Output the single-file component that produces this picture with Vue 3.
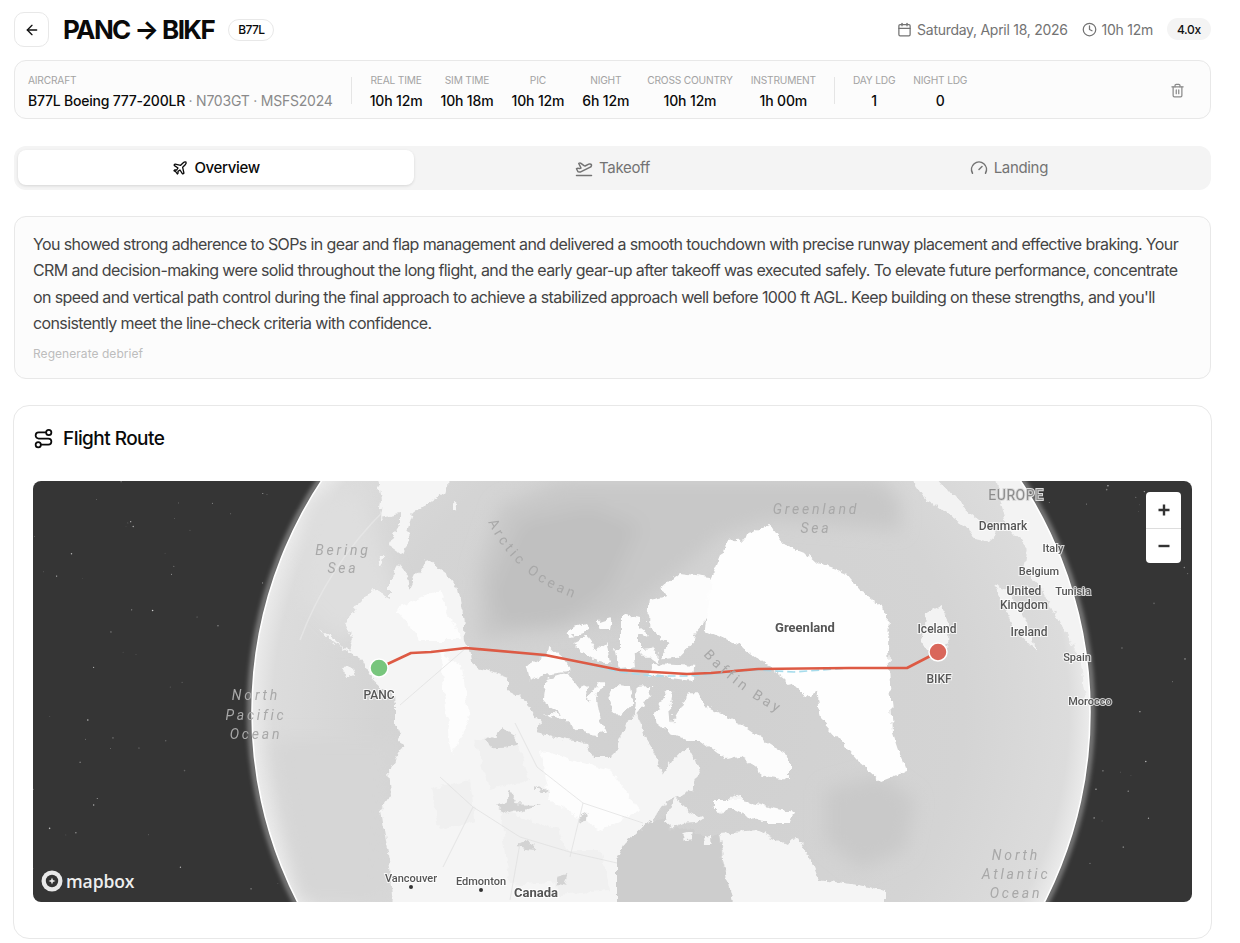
<template>
  <div class="page">
    <header class="top">
      <button class="back">
        <svg width="16" height="16" viewBox="0 0 24 24" class="ic"><path d="M12 19l-7-7 7-7" /><path d="M19 12H5" /></svg>
      </button>
      <h1 class="title">PANC → BIKF</h1>
      <span class="chip">B77L</span>
      <div class="top-meta">
        <svg width="15" height="15" viewBox="0 0 24 24" class="ic"><path d="M8 2v4" /><path d="M16 2v4" /><rect x="3" y="4" width="18" height="18" rx="2" /><path d="M3 10h18" /></svg>
        <span class="meta-date">Saturday, April 18, 2026</span>
        <svg width="15" height="15" viewBox="0 0 24 24" class="ic meta-clock"><circle cx="12" cy="12" r="10" /><path d="M12 6v6l4 2" /></svg>
        <span>10h 12m</span>
        <span class="rate">4.0x</span>
      </div>
    </header>

    <section class="info">
      <div class="cell-left">
        <div class="lbl">AIRCRAFT</div>
        <div class="val">B77L Boeing 777-200LR <span class="muted">· N703GT · MSFS2024</span></div>
      </div>
      <div class="sep"></div>
      <div v-for="s in times" :key="s.label" class="cell">
        <div class="lbl">{{ s.label }}</div>
        <div class="val">{{ s.value }}</div>
      </div>
      <div class="sep"></div>
      <div v-for="s in landings" :key="s.label" class="cell">
        <div class="lbl">{{ s.label }}</div>
        <div class="val">{{ s.value }}</div>
      </div>
      <button class="trash">
        <svg width="15" height="15" viewBox="0 0 24 24" class="ic"><path d="M3 6h18" /><path d="M19 6v14c0 1-1 2-2 2H7c-1 0-2-1-2-2V6" /><path d="M8 6V4c0-1 1-2 2-2h4c1 0 2 1 2 2v2" /><path d="M10 11v6" /><path d="M14 11v6" /></svg>
      </button>
    </section>

    <nav class="tabs">
      <div class="tab active">
        <svg width="16" height="16" viewBox="0 0 24 24" class="ic"><path d="M17.8 19.2 16 11l3.5-3.5C21 6 21.5 4 21 3c-1-.5-3 0-4.5 1.5L13 8 4.8 6.2c-.5-.1-.9.1-1.1.5l-.3.5c-.2.5-.1 1 .3 1.3L9 12l-2 3H4l-1 1 3 2 2 3 1-1v-3l3-2 3.5 5.3c.3.4.8.5 1.3.3l.5-.2c.4-.3.6-.7.5-1.2z" /></svg>
        Overview
      </div>
      <div class="tab">
        <svg width="18" height="18" viewBox="0 0 24 24" class="ic"><path d="M2 22h20" /><path d="M6.36 17.4 4 17l-2-4 1.1-.55a2 2 0 0 1 1.8 0l.17.1a2 2 0 0 0 1.8 0L8 12 5 6l.9-.45a2 2 0 0 1 2.09.2l4.02 3a2 2 0 0 0 2.1.2l4.19-2.06a2.41 2.41 0 0 1 1.73-.17L21 7a1.4 1.4 0 0 1 .87 1.99l-.38.76c-.23.46-.6.84-1.07 1.08L7.58 17.2a2 2 0 0 1-1.22.18Z" /></svg>
        Takeoff
      </div>
      <div class="tab">
        <svg width="18" height="18" viewBox="0 0 24 24" class="ic"><path d="m12 14 4-4" /><path d="M3.34 19a10 10 0 1 1 17.32 0" /></svg>
        Landing
      </div>
    </nav>

    <section class="debrief">
      <p>You showed strong adherence to SOPs in gear and flap management and delivered a smooth touchdown with precise runway placement and effective braking. Your CRM and decision-making were solid throughout the long flight, and the early gear-up after takeoff was executed safely. To elevate future performance, concentrate on speed and vertical path control during the final approach to achieve a stabilized approach well before 1000 ft AGL. Keep building on these strengths, and you'll consistently meet the line-check criteria with confidence.</p>
      <div class="regen">Regenerate debrief</div>
    </section>

    <section class="route">
      <h2 class="route-title">
        <svg width="21" height="21" viewBox="0 0 24 24" class="ic"><circle cx="6" cy="19" r="3" /><path d="M9 19h8.5a3.5 3.5 0 0 0 0-7h-11a3.5 3.5 0 0 1 0-7H15" /><circle cx="18" cy="5" r="3" /></svg>
        Flight Route
      </h2>
      <div class="map">
        <svg class="map-svg" viewBox="33 481 1159 421" width="1159" height="421">
          <defs>
            <clipPath id="globe"><circle cx="671" cy="712" r="419" /></clipPath>
            <radialGradient id="sea" gradientUnits="userSpaceOnUse" cx="671" cy="712" r="419">
              <stop offset="0" stop-color="#d0d0d0" />
              <stop offset="0.7" stop-color="#d4d4d4" />
              <stop offset="0.95" stop-color="#dcdcdc" />
              <stop offset="1" stop-color="#ebebeb" />
            </radialGradient>
            <filter id="soft" filterUnits="userSpaceOnUse" x="33" y="481" width="1159" height="421"><feGaussianBlur stdDeviation="9" /></filter>
            <filter id="glow" filterUnits="userSpaceOnUse" x="33" y="481" width="1159" height="421"><feGaussianBlur stdDeviation="2.5" /></filter>
            <filter id="rough" filterUnits="userSpaceOnUse" x="33" y="461" width="1159" height="471">
              <feTurbulence type="fractalNoise" baseFrequency="0.11" numOctaves="3" seed="4" result="n" />
              <feDisplacementMap in="SourceGraphic" in2="n" scale="9" xChannelSelector="R" yChannelSelector="G" />
            </filter>
            <path id="arcticPath" d="M488 522 Q520 588 600 606" />
            <path id="baffinPath" d="M703 655 Q735 690 780 714" />
          </defs>

          <rect x="33" y="481" width="1159" height="421" fill="#353535" />
          <circle v-for="(st, i) in stars" :key="i" :cx="st.x" :cy="st.y" :r="st.r" fill="#fff" :opacity="st.o" />

          <circle cx="671" cy="712" r="421" fill="none" stroke="#fff" stroke-width="4" opacity=".5" filter="url(#glow)" />
          <circle cx="671" cy="712" r="419" fill="url(#sea)" />

          <g clip-path="url(#globe)">
            <!-- bathymetry -->
            <g filter="url(#soft)">
              <path d="M478 570 L500 505 L560 481 L880 481 L900 500 L900 530 L770 520 L720 535 L680 570 L620 620 L480 640 Z" fill="#c8c8c8" />
              <path d="M490 590 L520 520 L590 505 L640 525 L610 590 L560 625 L500 625 Z" fill="#c0c0c0" />
              <path d="M825 790 L880 775 L915 800 L905 850 L860 868 L825 840 Z" fill="#c9c9c9" />
              <path d="M310 500 L360 490 L400 600 L340 640 L300 600 Z" fill="#dedede" />
              <path d="M270 740 L395 740 L385 900 L300 900 Z" fill="#d6d6d6" />
            </g>
            <path d="M300 640 Q330 560 395 500" fill="none" stroke="#e8e8e8" stroke-width="1.5" opacity=".7" />

            <g filter="url(#rough)">
              <!-- north america -->
              <path class="land" d="M390 578 L398 564 L408 576 L410 589 L417 574 L427 559 L447 574 L458 591 L463 614 L465 641 L470 650 L473 665 L508 678 L508 690 L523 698 L540 725 L537 733 L567 740 L587 743 L593 757 L613 757 L620 740 L627 723 L637 715 L643 733 L653 750 L663 775 L673 760 L687 745 L695 760 L700 773 L693 790 L680 795 L667 800 L653 820 L643 827 L627 843 L617 860 L618 885 L640 930 L397 930 L389 860 L381 810 L391 795 L389 770 L403 745 L395 723 L395 700 L368 675 L363 661 L348 648 L353 638 L345 624 L357 604 L372 589 L390 598 Z" />
              <path class="land" d="M320 628 L330 640 L348 652 L363 662 L372 664 L362 655 L340 646 L328 634 Z" />
              <path class="land" d="M342 668 L352 667 L356 675 L348 678 Z" />
              <path class="land" d="M375 460 L448 460 L447 491 L413 514 L407 531 L410 534 L402 554 L388 544 L400 524 L400 514 L380 518 L382 501 Z" />
              <path class="land" d="M453 501 L458 503 L457 513 L453 511 Z" />
              <path class="land" d="M380 556 L384 556 L380 569 L377 568 Z" />

              <!-- mainland shades -->
              <g fill="#fdfdfd">
                <path d="M440 650 L462 668 L470 720 L452 755 L445 700 Z" />
                <path d="M540 750 L610 770 L640 810 L600 830 L550 800 Z" />
                <path d="M395 610 L440 590 L460 640 L420 640 Z" />
              </g>
              <g fill="#f0f0f0">
                <path d="M475 740 L515 735 L530 780 L490 790 Z" />
                <path d="M500 810 L560 830 L575 880 L510 885 Z" />
                <path d="M430 790 L470 780 L475 820 L440 830 Z" />
                <path d="M540 850 L600 850 L610 890 L560 895 Z" />
              </g>

              <!-- lakes -->
              <g transform="translate(440 600) scale(.3333)" fill="#d3d3d3">
                <path d="M168 620 L200 608 L205 570 L232 610 L300 612 L250 632 L210 642 Z" />
                <path d="M140 422 L190 385 L222 405 L238 432 L200 440 L150 442 Z" />
                <path d="M225 738 L255 726 L300 748 L260 744 Z" />
                <path d="M420 650 L440 640 L438 665 L422 668 Z" />
                <path d="M352 830 L382 822 L372 860 L350 855 Z" />
                <path d="M275 570 L300 562 L330 578 L295 570 Z" />
              </g>

              <!-- hudson bay and strait -->
              <path d="M617 860 L625 843 L643 827 L653 820 L667 817 L670 830 L693 827 L707 840 L718 833 L723 867 L735 890 L738 930 L617 930 Z" fill="#cdcdcd" />
              <path class="land" d="M719 833 L758 830 L786 843 L798 837 L810 860 L818 880 L860 885 L885 890 L885 930 L740 930 L725 870 Z" />
              <g transform="translate(440 600) scale(.3333)">
                <path class="land" d="M675 665 L705 590 L730 620 L790 655 L770 668 L730 672 L700 685 Z" />
                <path class="land" d="M730 700 L765 690 L755 718 L735 720 Z" />
                <path class="land" d="M795 710 L810 708 L812 735 L798 735 Z" />
                <path class="land" d="M820 625 L880 590 L900 580 L900 625 L840 635 Z" />
              </g>

              <!-- arctic islands -->
              <g transform="translate(440 600) scale(.3333)" class="isl">
                <path d="M375 95 L440 70 L450 90 L395 110 Z" />
                <path d="M400 130 L440 110 L470 150 L500 130 L510 190 L470 185 L430 160 Z" />
                <path d="M470 65 L515 50 L510 90 L480 90 Z" />
                <path d="M548 50 L575 45 L590 100 L560 105 Z" />
                <path d="M600 85 L620 100 L615 110 L600 105 Z" />
                <path d="M525 145 L580 145 L585 205 L540 210 Z" />
                <path d="M600 145 L640 140 L660 190 L630 170 L610 170 Z" />
                <path d="M625 50 L630 0 L720 -20 L790 -20 L770 80 L760 130 L720 170 L660 175 L690 130 L660 110 L625 80 Z" />
                <path d="M640 192 L760 197 L755 242 L630 226 Z" />
                <path d="M260 197 L320 165 L325 135 L350 160 L385 185 L385 215 L310 225 L270 240 Z" />
                <path d="M320 240 L385 220 L420 265 L440 255 L445 305 L470 250 L490 250 L470 290 L480 350 L498 395 L470 405 L420 395 L370 360 L310 340 L370 345 L310 310 Z" />
                <path d="M505 290 L530 255 L570 258 L580 310 L540 350 L520 330 Z" />
                <path d="M590 260 L640 258 L610 320 L585 350 Z" />
                <path d="M645 340 L680 275 L700 275 L690 320 L695 370 L745 280 L775 280 L800 320 L860 350 L900 370 L1050 470 L1050 540 L980 530 L900 470 L860 480 L780 420 L740 420 L690 400 L650 370 Z" />
              </g>
              <path class="isl" d="M660 590 L680 573 L711 577 L715 600 L703 625 L690 640 L670 625 L680 605 Z" />
              <path class="isl" d="M620 613 L640 618 L640 650 L620 660 Z" />
              <path class="isl" d="M715 800 L739 800 L794 813 L790 823 L762 823 L735 810 L715 810 Z" />

              <!-- greenland -->
              <path d="M770 525 L785 545 L806 553 L817 563 L845 573 L860 590 L877 603 L889 613 L888 650 L893 733 L906 772 L881 782 L857 760 L821 720 L817 690 L810 697 L790 683 L770 667 L742 647 L705 630 L711 580 L727 540 L745 538 L758 530 Z" fill="#fefefe" />

              <!-- europe -->
              <g transform="translate(880 481) scale(.3333)" class="eu">
                <path d="M60 -60 L130 -60 L250 80 L300 120 L350 155 L340 180 L280 170 L250 130 L140 60 Z" />
                <path d="M330 -60 L430 -60 L520 80 L600 260 L640 420 L680 660 L620 660 L600 530 L540 430 L490 330 L430 260 L440 200 L380 130 Z" />
                <path d="M135 400 L180 375 L205 420 L205 490 L150 510 L120 490 L130 450 Z" />
                <path d="M340 310 L380 320 L430 400 L472 515 L440 480 L400 440 L370 370 Z" />
              </g>
            </g>

            <!-- borders -->
            <g stroke="#dedede" fill="none" stroke-width=".7">
              <path d="M466 648 L400 705" />
              <path d="M515 723 L537 767 L583 803 L643 823" />
              <path d="M583 803 L570 857" />
              <path d="M440 777 L473 807 L520 837 L573 853 L617 863" />
              <path d="M473 807 L443 867 M520 843 L510 900" />
            </g>
          </g>

          <circle cx="671" cy="712" r="419" fill="none" stroke="#fff" stroke-width="1.6" />

          <!-- route -->
          <polyline class="dash" points="466,648 557,657 620,672 652,676 687,676 758,670 794,672 849,668" />
          <polyline class="line" points="379,668 411,653 431,652 466,648 545,655 620,670 687,674 711,673 758,669 849,668 907,668 938,652" />
          <circle cx="379" cy="668" r="9" fill="#78c67d" stroke="#fff" stroke-width="1.5" />
          <circle cx="938" cy="652" r="9" fill="#d9665a" stroke="#fff" stroke-width="1.5" />

          <!-- labels -->
          <g class="sea-lbl">
            <text x="343" y="555">Bering</text>
            <text x="343" y="573">Sea</text>
            <text x="256" y="700">North</text>
            <text x="256" y="720">Pacific</text>
            <text x="256" y="739">Ocean</text>
            <text x="816" y="514">Greenland</text>
            <text x="816" y="533">Sea</text>
            <text x="1016" y="860">North</text>
            <text x="1016" y="879">Atlantic</text>
            <text x="1016" y="898">Ocean</text>
            <text class="along"><textPath href="#arcticPath">Arctic Ocean</textPath></text>
            <text class="along"><textPath href="#baffinPath">Baffin Bay</textPath></text>
          </g>
          <text class="lbl-eu" x="1016" y="500">EUROPE</text>
          <g class="place">
            <text x="1003" y="530">Denmark</text>
            <text x="1053" y="552" class="small">Italy</text>
            <text x="1039" y="575" class="small">Belgium</text>
            <text x="1024" y="595">United</text>
            <text x="1024" y="609">Kingdom</text>
            <text x="1073" y="595" class="small">Tunisia</text>
            <text x="937" y="633">Iceland</text>
            <text x="805" y="632" class="big">Greenland</text>
            <text x="1029" y="636">Ireland</text>
            <text x="1077" y="661" class="small">Spain</text>
            <text x="1090" y="705" class="small">Morocco</text>
            <text x="939" y="683">BIKF</text>
            <text x="379" y="699">PANC</text>
            <text x="411" y="882" class="small">Vancouver</text>
            <text x="481" y="885" class="small">Edmonton</text>
            <text x="536" y="897" class="big">Canada</text>
          </g>
          <circle cx="411" cy="887" r="2" fill="#333" />
          <circle cx="481" cy="890" r="2" fill="#333" />
        </svg>

        <div class="zoom">
          <button class="zoom-btn">
            <svg width="16" height="16" viewBox="0 0 16 16"><path d="M8 2.5v11M2.5 8h11" stroke="#333" stroke-width="2.4" /></svg>
          </button>
          <button class="zoom-btn">
            <svg width="16" height="16" viewBox="0 0 16 16"><path d="M2.5 8h11" stroke="#333" stroke-width="2.4" /></svg>
          </button>
        </div>

        <div class="mapbox">
          <svg width="22" height="22" viewBox="0 0 22 22"><circle cx="11" cy="11" r="10.5" fill="#e8e8e8" /><circle cx="11" cy="11" r="6.2" fill="#333" /><path d="M11 7.5l1 2.5 2.5 1-2.5 1-1 2.5-1-2.5-2.5-1 2.5-1z" fill="#e8e8e8" /></svg>
          <span>mapbox</span>
        </div>
      </div>
    </section>
  </div>
</template>

<script setup>
const times = [
  { label: 'REAL TIME', value: '10h 12m' },
  { label: 'SIM TIME', value: '10h 18m' },
  { label: 'PIC', value: '10h 12m' },
  { label: 'NIGHT', value: '6h 12m' },
  { label: 'CROSS COUNTRY', value: '10h 12m' },
  { label: 'INSTRUMENT', value: '1h 00m' },
]

const landings = [
  { label: 'DAY LDG', value: '1' },
  { label: 'NIGHT LDG', value: '0' },
]

// stars outside the globe, fixed seed so every render is the same
let seed = 7
function rnd() {
  seed = (seed * 16807) % 2147483647
  return seed / 2147483647
}

const stars = []
for (let i = 0; i < 260; i++) {
  const x = 33 + rnd() * 1159
  const y = 481 + rnd() * 421
  const r = 0.35 + rnd() * 0.5
  const o = 0.2 + rnd() * 0.6
  if (Math.hypot(x - 671, y - 712) > 428) stars.push({ x, y, r, o })
}
</script>

<style>
body {
  background: #fff;
  overflow: hidden;
}
</style>

<style scoped>
.page {
  width: 1240px;
  height: 943px;
  box-sizing: border-box;
  padding: 12px 29px 0 14px;
  font-family: Inter, "Liberation Sans", sans-serif;
  color: #0a0a0a;
  letter-spacing: -0.02em;
  overflow: hidden;
}

.ic {
  fill: none;
  stroke: currentColor;
  stroke-width: 2;
  stroke-linecap: round;
  stroke-linejoin: round;
  flex-shrink: 0;
}

.top {
  display: flex;
  align-items: center;
  height: 35px;
}

.back {
  width: 35px;
  height: 35px;
  padding: 0;
  display: flex;
  align-items: center;
  justify-content: center;
  background: #fff;
  border: 1px solid #e8e8e8;
  border-radius: 10px;
  color: #111;
}

.title {
  margin: 0 0 0 14px;
  font-size: 26px;
  font-weight: 700;
  letter-spacing: -1.6px;
  line-height: 35px;
}

.chip {
  margin-left: 14px;
  height: 22px;
  padding: 0 9px;
  display: flex;
  align-items: center;
  box-sizing: border-box;
  border: 1px solid #e8e8e8;
  border-radius: 11px;
  font-size: 12px;
  font-weight: 500;
  letter-spacing: -0.6px;
}

.top-meta {
  margin-left: auto;
  padding-bottom: 1px;
  display: flex;
  align-items: center;
  gap: 5px;
  font-size: 14px;
  letter-spacing: -0.28px;
  color: #737373;
}

.meta-clock {
  margin-left: 9px;
}

.rate {
  margin-left: 9px;
  height: 22px;
  padding: 0 10px;
  display: flex;
  align-items: center;
  background: #f4f4f4;
  border-radius: 11px;
  font-size: 12px;
  font-weight: 500;
  color: #111;
}

.info {
  margin-top: 13px;
  height: 59px;
  box-sizing: border-box;
  padding: 2px 13px 0;
  display: flex;
  align-items: center;
  gap: 18px;
  background: #fcfcfc;
  border: 1px solid #e8e8e8;
  border-radius: 12px;
}

.cell {
  text-align: center;
}

.lbl {
  font-size: 10.2px;
  line-height: 14px;
  letter-spacing: -0.2px;
  color: #a3a3a3;
}

.val {
  margin-top: 5px;
  font-size: 14px;
  line-height: 17px;
  font-weight: 500;
  letter-spacing: -0.15px;
  white-space: nowrap;
}

.cell-left .val {
  letter-spacing: -0.22px;
}

.muted {
  color: #8a8a8a;
  font-weight: 400;
}

.sep {
  width: 1px;
  height: 27px;
  background: #e5e5e5;
}

.trash {
  margin-left: auto;
  margin-right: 12px;
  padding: 0;
  display: flex;
  background: none;
  border: 0;
  color: #8a8a8a;
}

.tabs {
  margin-top: 27px;
  height: 44px;
  box-sizing: border-box;
  padding: 4px;
  display: grid;
  grid-template-columns: repeat(3, 1fr);
  background: #f4f4f4;
  border-radius: 12px;
}

.tab {
  height: 35px;
  display: flex;
  align-items: center;
  justify-content: center;
  gap: 6px;
  font-size: 15px;
  font-weight: 400;
  color: #737373;
  border-radius: 8px;
}

.tab.active {
  background: #fff;
  color: #0a0a0a;
  font-weight: 500;
  box-shadow: 0 1px 3px rgba(0, 0, 0, 0.12);
}

.debrief {
  margin-top: 26px;
  height: 163px;
  box-sizing: border-box;
  padding: 14px 18px;
  background: #fcfcfc;
  border: 1px solid #e8e8e8;
  border-radius: 12px;
}

.debrief p {
  margin: 0;
  font-size: 16px;
  line-height: 26.3px;
  letter-spacing: -0.61px;
  color: #444;
}

.regen {
  margin-top: 10px;
  font-size: 12px;
  line-height: 15px;
  letter-spacing: 0.05px;
  color: #bdbdbd;
}

.route {
  margin: 26px -1px 0;
  height: 534px;
  box-sizing: border-box;
  padding: 0 19px;
  background: #fff;
  border: 1px solid #e8e8e8;
  border-radius: 16px;
}

.route-title {
  margin: 0;
  height: 75px;
  display: flex;
  align-items: center;
  gap: 9px;
  padding-bottom: 10px;
  box-sizing: border-box;
  font-size: 19px;
  font-weight: 500;
  letter-spacing: -0.55px;
}

.map {
  position: relative;
  width: 1159px;
  height: 421px;
  border-radius: 8px;
  overflow: hidden;
}

.map-svg {
  display: block;
}

.land {
  fill: #f5f5f5;
}

.isl,
.isl path {
  fill: #fcfcfc;
}

.eu path {
  fill: #f3f3f3;
}

.line {
  fill: none;
  stroke: #dd5a44;
  stroke-width: 2.6;
  stroke-linejoin: round;
}

.dash {
  fill: none;
  stroke: #a6dcec;
  stroke-width: 1.6;
  stroke-dasharray: 8 4;
}

.sea-lbl text {
  font-family: Roboto, sans-serif;
  font-size: 14px;
  font-style: italic;
  letter-spacing: 0.2em;
  fill: #a8a8a8;
  text-anchor: middle;
}

.sea-lbl .along {
  text-anchor: start;
  font-style: normal;
  font-size: 14px;
  letter-spacing: 0.24em;
}

.lbl-eu {
  font-family: Roboto, sans-serif;
  font-size: 14px;
  letter-spacing: 0.04em;
  fill: #8c8c8c;
  stroke: #dcdcdc;
  stroke-width: 2px;
  paint-order: stroke;
  text-anchor: middle;
}

.place text {
  font-family: Roboto, sans-serif;
  font-size: 12px;
  font-weight: 500;
  letter-spacing: 0;
  fill: #555;
  stroke: #fff;
  stroke-width: 2px;
  stroke-opacity: 0.75;
  paint-order: stroke;
  text-anchor: middle;
}

.place .small {
  font-size: 11px;
}

.place .big {
  font-size: 13px;
  font-weight: 700;
}

.zoom {
  position: absolute;
  top: 11px;
  right: 11px;
  width: 35px;
  background: #fff;
  border-radius: 4px;
}

.zoom-btn {
  width: 35px;
  height: 35.5px;
  padding: 0;
  display: flex;
  align-items: center;
  justify-content: center;
  background: none;
  border: 0;
}

.zoom-btn + .zoom-btn {
  border-top: 1px solid #ddd;
}

.mapbox {
  position: absolute;
  left: 8px;
  bottom: 9px;
  display: flex;
  align-items: center;
  gap: 3px;
  font-family: "Open Sans", sans-serif;
  font-size: 17.5px;
  font-weight: 600;
  letter-spacing: -0.1px;
  color: #eee;
}
</style>
